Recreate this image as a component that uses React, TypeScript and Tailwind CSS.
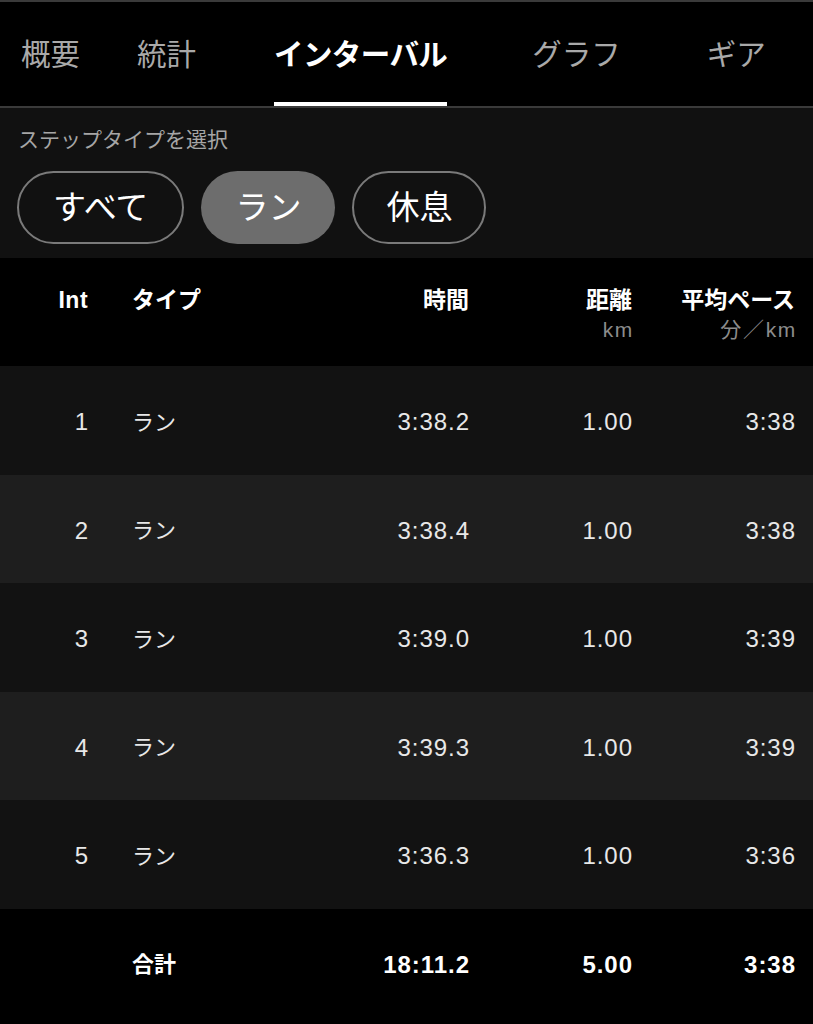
import React from "react";

const FONT = '"Liberation Sans", "Noto Sans CJK JP", sans-serif';

const rows = [
  { n: "1", t: "3:38.2", d: "1.00", p: "3:38" },
  { n: "2", t: "3:38.4", d: "1.00", p: "3:38" },
  { n: "3", t: "3:39.0", d: "1.00", p: "3:39" },
  { n: "4", t: "3:39.3", d: "1.00", p: "3:39" },
  { n: "5", t: "3:36.3", d: "1.00", p: "3:36" },
];

export default function App() {
  return (
    <div className="w-[813px] h-[1024px] bg-black text-white overflow-hidden" style={{ fontFamily: FONT }}>
      <div className="h-[2px] bg-[#3a3a3a]" />
      {/* Tabs */}
      <div className="h-[106px] flex items-stretch border-b-2 border-[#3a3a3a] text-[29.5px] leading-none">
        <div className="ml-[21px] flex items-center pt-[2px] text-[#a9a9a9]">概要</div>
        <div className="ml-[57px] flex items-center pt-[2px] text-[#a9a9a9]">統計</div>
        <div className="ml-[78px] relative flex items-center pt-[2px] font-bold text-white tracking-[-0.02em]">
          インターバル
          <div className="absolute left-0 right-0 bottom-0 h-[4px] bg-white" />
        </div>
        <div className="ml-[85px] flex items-center pt-[2px] text-[#a9a9a9]">グラフ</div>
        <div className="ml-[86px] flex items-center pt-[2px] text-[#a9a9a9]">ギア</div>
      </div>
      {/* Filter */}
      <div className="bg-[#111111] h-[150px] pt-[19px] px-[17px]">
        <div className="text-[21px] leading-[26px] text-[#a6a6a6] pl-[1px]">ステップタイプを選択</div>
        <div className="flex gap-[17px] mt-[18px]">
          <div className="h-[73px] px-[34px] rounded-full border-2 border-[#7a7a7a] flex items-center text-[33px] text-white">すべて</div>
          <div className="h-[73px] px-[34px] rounded-full bg-[#6d6d6d] flex items-center text-[33px] text-white">ラン</div>
          <div className="h-[73px] px-[32px] rounded-full border-2 border-[#7a7a7a] flex items-center text-[33px] text-white">休息</div>
        </div>
      </div>
      {/* Header */}
      <div className="h-[108px] bg-black flex pt-[27px] pr-[18px] text-[23px] font-bold leading-[30px]">
        <div className="w-[88px] text-right tracking-[0.02em]">Int</div>
        <div className="ml-[44px] w-[120px]">タイプ</div>
        <div className="flex-1 text-right">時間</div>
        <div className="w-[163px] text-right">
          <div>距離</div>
          <div className="font-normal text-[#8c8c8c] text-[21px] tracking-[0.08em] leading-[26px] mt-[2px] -mr-[2px]">km</div>
        </div>
        <div className="w-[163px] text-right">
          <div>平均ペース</div>
          <div className="font-normal text-[#8c8c8c] text-[21px] tracking-[0.08em] leading-[26px] mt-[2px] -mr-[2px]">分／km</div>
        </div>
      </div>
      {/* Rows */}
      {rows.map((r, i) => (
        <div
          key={r.n}
          className={`h-[108.5px] flex items-center pr-[17px] pt-[4px] text-[24px] tracking-[0.04em] text-[#e8e8e8] ${i % 2 === 0 ? "bg-[#121212]" : "bg-[#1e1e1e]"}`}
        >
          <div className="w-[89px] text-right">{r.n}</div>
          <div className="ml-[43px] w-[120px] text-[22px] tracking-normal">ラン</div>
          <div className="flex-1 text-right">{r.t}</div>
          <div className="w-[163px] text-right">{r.d}</div>
          <div className="w-[163px] text-right">{r.p}</div>
        </div>
      ))}
      {/* Total */}
      <div className="h-[112px] flex items-center pr-[17px] text-[24px] tracking-[0.04em] font-bold text-white bg-black">
        <div className="w-[89px]" />
        <div className="ml-[43px] w-[120px] text-[22px] tracking-normal">合計</div>
        <div className="flex-1 text-right">18:11.2</div>
        <div className="w-[163px] text-right">5.00</div>
        <div className="w-[163px] text-right">3:38</div>
      </div>
    </div>
  );
}
